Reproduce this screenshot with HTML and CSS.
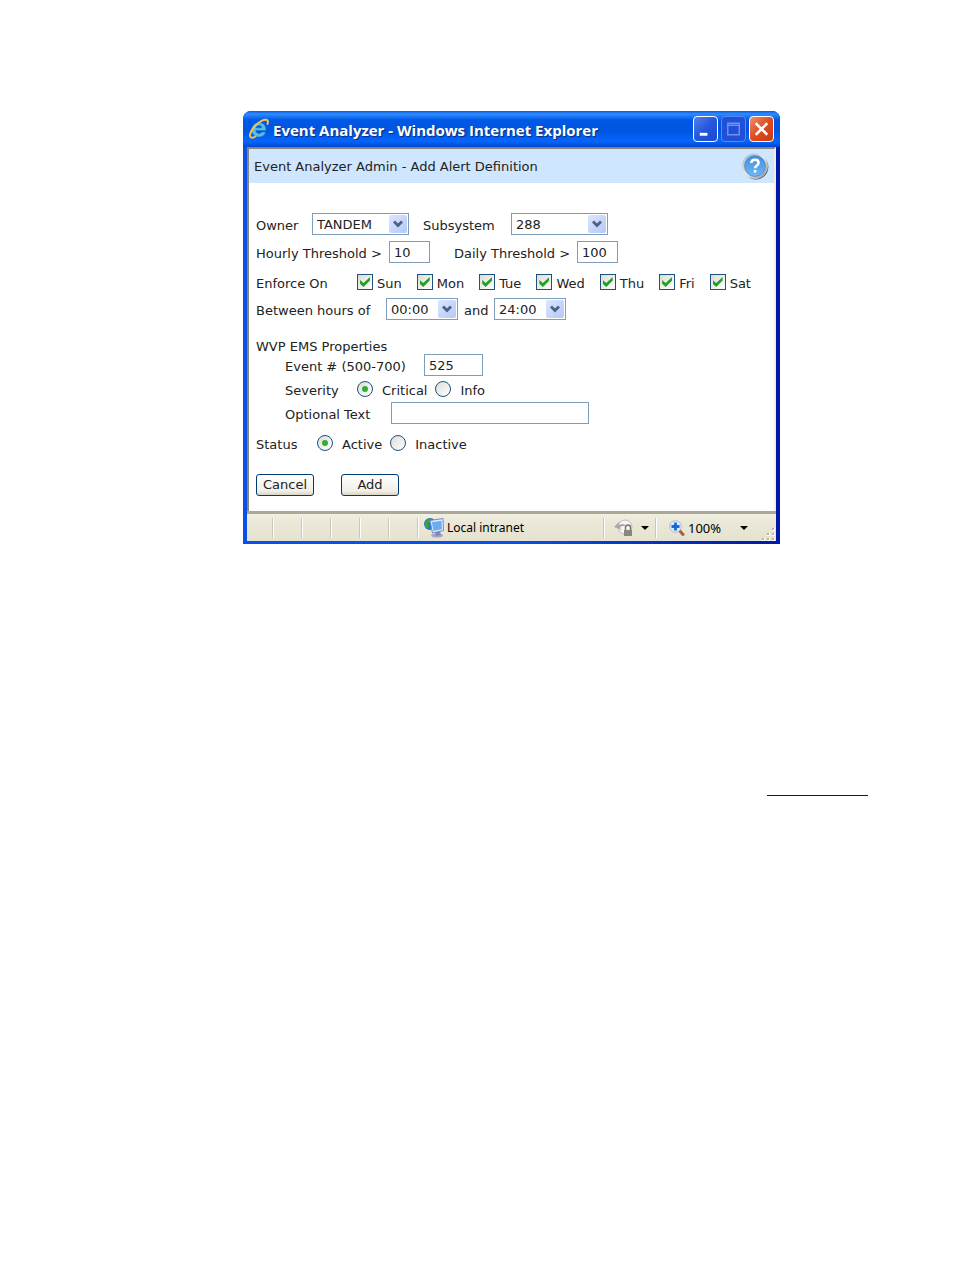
FILE: index.html
```html
<!DOCTYPE html>
<html lang="en">
<head>
    <meta charset="UTF-8">
    <meta name="viewport" content="width=device-width, initial-scale=1.0">
    <title>Event Analyzer</title>
    <link rel="stylesheet" href="styles.css">
</head>
<body>
    <main class="page">
        <div class="window">
            <header class="titlebar">
                <svg class="ie-logo" viewBox="0 0 22 22" aria-hidden="true">
                    <path d="M18 12.500H7.800c.2 2 1.500 3 3.200 3 1.300 0 2.200-.6 2.700-1.500h4c-.9 3.200-3.500 5-6.800 5-4.200 0-7.200-2.900-7.200-7.100 0-4.200 3.100-7.300 7.300-7.300 4.500 0 7.200 3.100 7 7.900zM7.900 9.800h6c-.2-1.500-1.200-2.300-2.900-2.300-1.600 0-2.700.8-3.100 2.300z" fill="#56bdf2" stroke="#1673ba" stroke-width=".6"/>
                    <path d="M19.500 6c.8-2.200.5-4-1.500-4.200C13 1.300 4 9.500 2.200 15.700c-.7 2.600.2 4.300 2.300 4 1-.1 2-.6 3-1.200" fill="none" stroke="#f4c544" stroke-width="2" stroke-linecap="round"/>
                </svg>
                <h1>Event Analyzer - Windows Internet Explorer</h1>
                <button type="button" class="win-btn" aria-label="Minimize">
                    <svg viewBox="0 0 24 24"><path d="M6 16h8v3H6z" fill="#fff"/></svg>
                </button>
                <button type="button" class="win-btn disabled" aria-label="Maximize" disabled>
                    <svg viewBox="0 0 24 24"><path d="M6 6h12v12H6zM6 8h12" fill="none" stroke="#6f90ee" stroke-width="1.500"/></svg>
                </button>
                <button type="button" class="win-btn close" aria-label="Close">
                    <svg viewBox="0 0 24 24"><path d="M6 6l12 12M18 6L6 18" stroke="#fff" stroke-width="2.600"/></svg>
                </button>
            </header>

            <div class="content">
                <div class="admin-bar">
                    <h2>Event Analyzer Admin - Add Alert Definition</h2>
                    <button type="button" class="help" aria-label="Help">
                        <svg viewBox="0 0 28 28">
                            <defs>
                                <linearGradient id="helpFill" x1="0" y1="0" x2="0" y2="1">
                                    <stop offset="0" stop-color="#3f8ddd"/>
                                    <stop offset="1" stop-color="#6fb7f7"/>
                                </linearGradient>
                                <linearGradient id="helpRim" x1="0" y1="0" x2="1" y2="1">
                                    <stop offset="0" stop-color="#a9b0b8"/>
                                    <stop offset=".5" stop-color="#e8eaec"/>
                                    <stop offset="1" stop-color="#8a8f95"/>
                                </linearGradient>
                            </defs>
                            <circle cx="14.800" cy="15" r="12.500" fill="#444"/>
                            <circle cx="14" cy="14" r="13" fill="url(#helpRim)"/>
                            <circle cx="14" cy="14" r="10.500" fill="url(#helpFill)" stroke="#4a85bd" stroke-width=".7"/>
                            <path d="M10.300 11c.1-2.200 1.500-3.300 3.700-3.300 2.100 0 3.600 1.200 3.600 3 0 2.800-3.500 2.700-3.500 5.500" fill="none" stroke="#fff" stroke-width="2.500"/>
                            <path d="M12.800 18h2.600v2.600h-2.600z" fill="#fff"/>
                        </svg>
                    </button>
                </div>

                <form class="alert-form" id="alertForm">
                    <div class="row">
                        <label class="owner-label" for="owner">Owner</label>
                        <span class="select">
                            <select id="owner"><option>TANDEM</option></select>
                            <svg viewBox="0 0 18 18"><path d="M5 6.500l4 4 4-4" fill="none" stroke="#4d6185" stroke-width="2.800"/></svg>
                        </span>
                        <label class="subsystem-label" for="subsystem">Subsystem</label>
                        <span class="select">
                            <select id="subsystem"><option>288</option></select>
                            <svg viewBox="0 0 18 18"><path d="M5 6.500l4 4 4-4" fill="none" stroke="#4d6185" stroke-width="2.800"/></svg>
                        </span>
                    </div>

                    <div class="row">
                        <label class="hourly-label" for="hourly">Hourly Threshold &gt;</label>
                        <input type="text" class="threshold" id="hourly" value="10">
                        <label class="daily-label" for="daily">Daily Threshold &gt;</label>
                        <input type="text" class="threshold" id="daily" value="100">
                    </div>

                    <div class="row days" role="group" aria-labelledby="enforceOn">
                        <span class="enforce-label" id="enforceOn">Enforce On</span>
                        <label><input type="checkbox" checked>Sun</label>
                        <label><input type="checkbox" checked>Mon</label>
                        <label><input type="checkbox" checked>Tue</label>
                        <label><input type="checkbox" checked>Wed</label>
                        <label><input type="checkbox" checked>Thu</label>
                        <label><input type="checkbox" checked>Fri</label>
                        <label><input type="checkbox" checked>Sat</label>
                    </div>

                    <div class="row">
                        <label class="between-label" for="hoursStart">Between hours of</label>
                        <span class="select hours">
                            <select id="hoursStart"><option>00:00</option></select>
                            <svg viewBox="0 0 18 18"><path d="M5 6.500l4 4 4-4" fill="none" stroke="#4d6185" stroke-width="2.800"/></svg>
                        </span>
                        <label class="and-label" for="hoursEnd">and</label>
                        <span class="select hours">
                            <select id="hoursEnd"><option>24:00</option></select>
                            <svg viewBox="0 0 18 18"><path d="M5 6.500l4 4 4-4" fill="none" stroke="#4d6185" stroke-width="2.800"/></svg>
                        </span>
                    </div>

                    <h3>WVP EMS Properties</h3>
                    <div class="properties">
                        <div class="row">
                            <label class="event-label" for="eventNumber">Event # (500-700)</label>
                            <input type="text" class="event-number" id="eventNumber" value="525">
                        </div>
                        <div class="row radios" role="radiogroup" aria-labelledby="severity">
                            <span class="severity-label" id="severity">Severity</span>
                            <label><input type="radio" name="severity" checked>Critical</label>
                            <label><input type="radio" name="severity">Info</label>
                        </div>
                        <div class="row">
                            <label class="optional-label" for="optionalText">Optional Text</label>
                            <input type="text" class="optional-text" id="optionalText">
                        </div>
                    </div>

                    <div class="row radios status" role="radiogroup" aria-labelledby="status">
                        <span class="status-label" id="status">Status</span>
                        <label><input type="radio" name="status" checked>Active</label>
                        <label><input type="radio" name="status">Inactive</label>
                    </div>

                    <div class="actions">
                        <button type="button">Cancel</button>
                        <button type="submit">Add</button>
                    </div>
                </form>
            </div>

            <footer class="statusbar">
                <span class="pane"></span>
                <span class="pane"></span>
                <span class="pane"></span>
                <span class="pane"></span>
                <span class="pane"></span>
                <span class="pane"></span>
                <span class="zone">
                    <svg viewBox="0 0 22 22" aria-hidden="true">
                        <ellipse cx="14" cy="18.500" rx="6" ry="2" fill="#a9a3c8"/>
                        <path d="M12 15l5-1 1 4-5 1z" fill="#8b84b8"/>
                        <circle cx="7" cy="7" r="6" fill="#2f6fd0"/>
                        <path d="M2 6c1-4 5-5 7-4l-1 3-3 2 1 3-2 2C2 10 1.500 8 2 6z" fill="#37a832"/>
                        <path d="M7 3.500L20 1.500l.5 12L9.500 16z" fill="#e2eefc" stroke="#6c8bc4"/>
                        <path d="M8.800 5.200l9.700-1.500.4 8.600-8.400 1.800z" fill="#69aef2"/>
                    </svg>
                    Local intranet
                </span>
                <span class="protect">
                    <svg viewBox="0 0 20 20" aria-hidden="true">
                        <circle cx="11" cy="9" r="7" fill="#f6f6f4" stroke="#bcbcb8"/>
                        <path d="M0 9l5-5v3c3-2 6-1 7 1-3-.5-5 .5-6 2l2 2z" fill="#aaa9a5"/>
                        <path d="M11.500 12V9.500a2.500 2.500 0 0 1 5 0V12" fill="none" stroke="#777" stroke-width="1.500"/>
                        <path d="M10 12h8v6h-8z" fill="#88887f"/>
                    </svg>
                    <span class="arrow"></span>
                </span>
                <span class="zoom">
                    <svg viewBox="0 0 16 16" aria-hidden="true">
                        <path d="M10 10l4 4.500" stroke="#a4623a" stroke-width="3" stroke-linecap="round"/>
                        <circle cx="6.500" cy="6.500" r="5.800" fill="#dcecff" stroke="#a3bddd"/>
                        <path d="M6.500 2.500v8M2.500 6.500h8" stroke="#1769d6" stroke-width="2.800"/>
                    </svg>
                    100%
                    <span class="arrow"></span>
                </span>
                <svg class="grip" viewBox="0 0 14 14" aria-hidden="true">
                    <path d="M10 1h3v3h-3zM5 6h3v3H5zM10 6h3v3h-3zM0 11h3v3H0zM5 11h3v3H5zM10 11h3v3h-3z" fill="#fff"/>
                    <path d="M10 1h2v2h-2zM5 6h2v2H5zM10 6h2v2h-2zM0 11h2v2H0zM5 11h2v2H5zM10 11h2v2h-2z" fill="#b8b4a2"/>
                </svg>
            </footer>
        </div>

        <a class="page-link" href="#alertForm" aria-label="Alert definition"></a>
    </main>
</body>
</html>
```

FILE: styles.css
```css
* {
    box-sizing: border-box;
}

body {
    margin: 0;
    background-color: #fff;
    font-family: "DejaVu Sans", Verdana, sans-serif;
    font-size: 13px;
    color: #222;
}

.page {
    display: flex;
    flex-direction: column;
    padding: 111px 86px 40px 243px;
}

.window {
    width: 100%;
    max-width: 537px;
    padding: 0 4px 3px;
    border-radius: 8px 8px 0 0;
    background: linear-gradient(90deg, #0a50e8, #0a50e8 50%, #0018a8);
}

.titlebar {
    display: flex;
    align-items: center;
    gap: 3px;
    height: 36px;
    margin: 0 -4px;
    padding: 0 6px 0 5px;
    border-radius: 8px 8px 0 0;
    background: linear-gradient(#0a5be0, #2f8cff 3px, #0058e6 9px, #0055e0 20px, #0566ff 30px, #0048d0);
}

.ie-logo {
    width: 22px;
    height: 22px;
}

.titlebar h1 {
    flex: 1;
    margin: 0;
    padding-top: 2px;
    font: bold 15px "Open Sans", "Trebuchet MS", sans-serif;
    color: #fff;
    text-shadow: 1px 1px 1px #0a2a80;
    white-space: nowrap;
}

.win-btn {
    width: 25px;
    height: 26px;
    padding: 0;
    border: 1px solid #fff;
    border-radius: 4px;
    background: linear-gradient(135deg, #5580ee, #2458dc 50%, #1a48cc);
}

.win-btn svg {
    display: block;
    width: 23px;
    height: 24px;
}

.win-btn.disabled {
    border-color: #5c88f0;
    background: #1f50d8;
}

.win-btn.close {
    background: linear-gradient(135deg, #f09070, #e04a20 50%, #c83c14);
}

.content {
    border-top: 2px solid #87857a;
    border-left: 2px solid #87857a;
    border-right: 2px solid #f1efe2;
    background-color: #fff;
}

.admin-bar {
    display: flex;
    align-items: center;
    justify-content: space-between;
    height: 34px;
    padding: 0 5px;
    background-color: #cfe6ff;
}

.admin-bar h2 {
    margin: 0;
    font-size: 13px;
    font-weight: normal;
}

.help {
    width: 28px;
    height: 28px;
    padding: 0;
    border: none;
    background: none;
}

.alert-form {
    padding: 30px 7px 15px;
}

.row {
    display: flex;
    align-items: center;
    height: 22px;
    margin-bottom: 6px;
    white-space: nowrap;
}

.row > label,
.row > span:first-child {
    padding-top: 3px;
}

.owner-label {
    width: 56px;
}

.subsystem-label {
    width: 102px;
    padding-left: 14px;
}

.hourly-label {
    width: 133px;
}

.daily-label {
    width: 147px;
    padding-left: 24px;
}

.enforce-label {
    width: 101px;
}

.between-label {
    width: 130px;
}

.and-label {
    width: 36px;
    padding-left: 6px;
}

.event-label {
    width: 139px;
}

.severity-label {
    width: 72px;
}

.optional-label {
    width: 106px;
}

.status-label {
    width: 61px;
}

input[type="text"],
select {
    height: 22px;
    margin: 0;
    padding: 0 4px;
    border: 1px solid #7f9db9;
    border-radius: 0;
    background-color: #fff;
    font: inherit;
    color: inherit;
}

.select {
    position: relative;
    width: 97px;
}

.select.hours {
    width: 72px;
}

.select select {
    display: block;
    width: 100%;
    appearance: none;
}

.select svg {
    position: absolute;
    top: 2px;
    right: 2px;
    width: 18px;
    height: 18px;
    border-radius: 2px;
    background: linear-gradient(135deg, #dbe6ff, #b4c9f8);
    pointer-events: none;
}

.threshold {
    width: 41px;
}

.event-number {
    width: 59px;
}

.optional-text {
    width: 198px;
}

.days {
    margin: 8px 0 5px;
}

.days label {
    display: flex;
    gap: 4px;
    margin-right: 15px;
}

input[type="checkbox"],
input[type="radio"] {
    display: grid;
    place-items: center;
    width: 16px;
    height: 16px;
    margin: -2px 0 0;
    border: 1px solid #1c5180;
    background: linear-gradient(135deg, #dcdcd7, #fff);
    appearance: none;
}

input[type="checkbox"]:checked::before {
    content: "";
    width: 10px;
    height: 10px;
    background-color: #21a121;
    clip-path: polygon(0 30%, 35% 60%, 100% 0, 100% 35%, 35% 100%, 0 68%);
}

input[type="radio"] {
    border-radius: 50%;
}

input[type="radio"]:checked::before {
    content: "";
    width: 6px;
    height: 6px;
    border-radius: 50%;
    background-color: #2fae2f;
}

.radios label {
    display: flex;
    gap: 9px;
    margin-right: 8px;
}

h3 {
    margin: 20px 0 0;
    font-size: 13px;
    font-weight: normal;
    line-height: 14px;
}

.properties {
    padding-left: 29px;
}

.properties .row {
    margin-bottom: 2px;
}

.status {
    margin: 8px 0 20px;
}

.actions {
    display: flex;
    gap: 27px;
}

.actions button {
    width: 58px;
    height: 22px;
    padding: 0 0 1px;
    border: 1px solid #003c74;
    border-radius: 3px;
    background: linear-gradient(#fff, #f0efe8 80%, #d8d4c6);
    font: inherit;
    color: inherit;
}

.statusbar {
    display: flex;
    align-items: center;
    height: 30px;
    border-top: 3px solid #aca899;
    background: linear-gradient(#f0eee0, #ebe8d7 30%, #e6e2d0);
    font: 12px "Noto Sans", Tahoma, sans-serif;
    color: #000;
}

.pane {
    width: 29px;
    height: 20px;
    border-right: 1px solid #cbc7b5;
    box-shadow: 1px 0 #fff;
}

.pane:first-child {
    width: 26px;
}

.zone {
    display: flex;
    flex: 1;
    align-items: center;
    gap: 2px;
    padding-left: 5px;
}

.zone svg {
    width: 22px;
    height: 22px;
}

.protect,
.zoom {
    display: flex;
    align-items: center;
    height: 20px;
    border-left: 1px solid #cbc7b5;
    box-shadow: inset 1px 0 #fff;
}

.protect {
    gap: 7px;
    width: 52px;
    padding-left: 10px;
}

.protect svg {
    width: 20px;
    height: 20px;
}

.zoom {
    gap: 3px;
    width: 121px;
    padding-left: 13px;
    font-size: 13px;
}

.zoom svg {
    width: 16px;
    height: 16px;
}

.arrow {
    border: 4px solid transparent;
    border-top-color: #000;
    border-bottom: none;
}

.zoom .arrow {
    margin-left: auto;
    margin-right: 28px;
}

.grip {
    width: 14px;
    height: 14px;
    margin-left: -14px;
    align-self: flex-end;
}

.page-link {
    align-self: flex-end;
    width: 101px;
    height: 16px;
    margin-top: 236px;
    border-bottom: 1px solid #0000d8;
}
```
